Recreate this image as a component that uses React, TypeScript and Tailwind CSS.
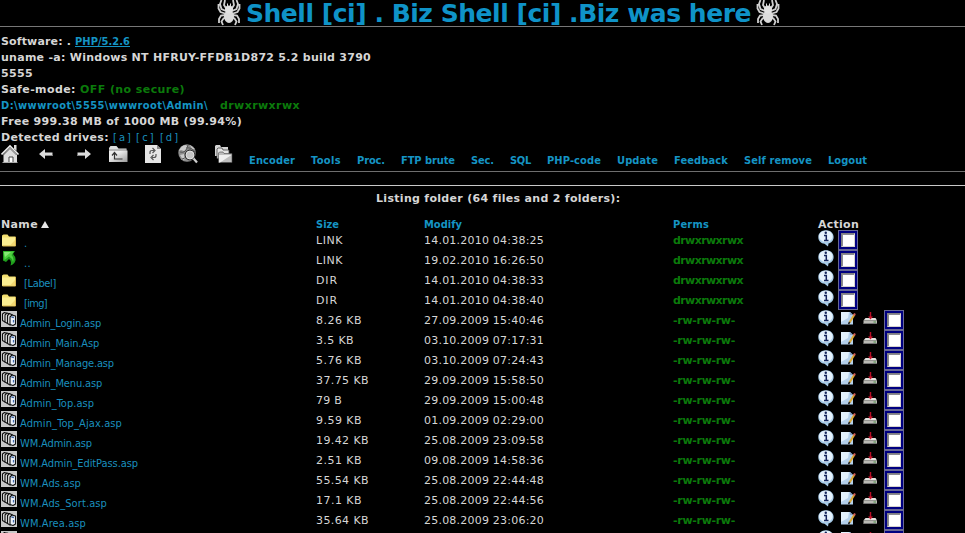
import { useLayoutEffect, useRef, useState } from "react";

/** Text whose tracking is adjusted so that it fills a fixed column width. */
function Fit({ w, children, className = "" }: { w: number; children: string; className?: string }) {
  const ref = useRef<HTMLSpanElement>(null);
  const [spacing, setSpacing] = useState(0);
  useLayoutEffect(() => {
    if (ref.current) {
      const natural = ref.current.getBoundingClientRect().width;
      setSpacing((w - natural) / children.length);
    }
  }, [w, children]);
  return (
    <span ref={ref} className={`inline-block whitespace-pre ${className}`} style={{ letterSpacing: `${spacing}px` }}>
      {children}
    </span>
  );
}

const verdana = "font-['DejaVu_Sans',sans-serif]";
const tahoma = "font-['DejaVu_Sans_Condensed','DejaVu_Sans',sans-serif]";

function Spider() {
  return (
    <svg width="24" height="26" viewBox="0 0 24 26" className="shrink-0">
      <g fill="none" stroke="#d0d0d0" strokeWidth="1.8">
        <path d="M9 11 4.500 9 3 4 4.500 0M8 13.500 3.500 12 1.500 8.500 1.500 4M9 15 4 15.500 2 19 2 23M10 17 6.500 18.500 4.500 21.500 6 25" />
        <path d="M15 11 19.500 9 21 4 19.500 0M16 13.500 20.500 12 22.500 8.500 22.500 4M15 15 20 15.500 22 19 22 23M14 17 17.500 18.500 19.500 21.500 18 25" />
        <path d="M9.500 9 7 5 8 0M14.500 9 17 5 16 0" />
      </g>
      <ellipse cx="12" cy="16.500" rx="5" ry="6.500" fill="#dcdcdc" />
      <ellipse cx="12" cy="9.500" rx="4" ry="4" fill="#e2e2e2" />
      <path d="M10.500 7V3.500M13.500 7V3.500" stroke="#ddd" />
    </svg>
  );
}

function HomeIcon() {
  return (
    <svg width="20" height="20" viewBox="0 0 20 20">
      <path d="M2.500 10.500 9 3.500 16 10.500V19H2.500Z" fill="#dedede" />
      <path d="M.5 10.500 9 2 17.500 10.500" fill="none" stroke="#eee" strokeWidth="1.700" />
      <path d="M2.500 11 9 4.500 15.500 11" fill="none" stroke="#666" strokeWidth=".9" />
      <path d="M13 1h2.500v6L13 4.500Z" fill="#ddd" />
      <path d="M8 19v-6h4v6" fill="#fff" stroke="#444" />
      <path d="M1.500 18.500h15" stroke="#aaa" />
    </svg>
  );
}

function ArrowIcon({ flip = false }: { flip?: boolean }) {
  return (
    <svg width="14" height="12" viewBox="0 0 14 12" className={flip ? "-scale-x-100" : ""}>
      <path d="M0 6 6 1V4.500H13.500V8H6V11Z" fill="#dcdcdc" />
      <path d="M6 7.500H13.500" stroke="#888" />
    </svg>
  );
}

function UpFolderIcon() {
  return (
    <svg width="20" height="18" viewBox="0 0 20 18">
      <defs>
        <linearGradient id="upFolder" x1="0" y1="0" x2="1" y2="1">
          <stop offset=".35" stopColor="#ececec" />
          <stop offset="1" stopColor="#999" />
        </linearGradient>
      </defs>
      <path d="M0 16.500V3L1.500 1H7.500L9.500 3.500H17.500V16.500Z" fill="#dedede" />
      <path d="M0 5.500H18.500V17H0Z" fill="url(#upFolder)" />
      <path d="M0 5H17.500" stroke="#8a8a8a" fill="none" />
      <path d="M5.500 8.500v5.500h8M3 10.500l2.500-3 2.500 3" stroke="#333" strokeWidth="1.200" fill="none" />
    </svg>
  );
}

function RefreshIcon() {
  return (
    <svg width="16" height="18" viewBox="0 0 16 18">
      <path d="M0 0H12L16 4V18H0Z" fill="#e5e5e5" />
      <path d="M12 0V4H16Z" fill="#888" />
      <path d="M5 9V7.500Q5 5.500 7 5.500H9M7.500 3 10 5.500 7.500 8M11 9V10.500Q11 12.500 9 12.500H7M8.500 10 6 12.500 8.500 15" fill="none" stroke="#555" strokeWidth="1.200" />
    </svg>
  );
}

function SearchIcon() {
  return (
    <svg width="20" height="20" viewBox="0 0 20 20">
      <circle cx="9" cy="9" r="8.700" fill="#8e8e8e" />
      <path d="M1 7Q3 1 8 1L10 4 6 7 3 6ZM12 1 17 5 14 5ZM2 11 6 10 7 15 5 16Z" fill="#ccc" />
      <path d="M2 8Q8 10 10 1M4 15Q9 14 9 9M8 4Q14 3 17 8" stroke="#555" fill="none" />
      <circle cx="12" cy="11" r="4.700" fill="#c4c4c4" stroke="#333" strokeWidth="1.500" />
      <circle cx="12" cy="11" r="4" fill="none" stroke="#f4f4f4" strokeWidth=".8" />
      <path d="M15.500 14.500 19 18.500" stroke="#ccc" strokeWidth="2.200" />
    </svg>
  );
}

function CopyIcon() {
  return (
    <svg width="18" height="18" viewBox="0 0 18 18">
      <path d="M0 11V1L1 0H5L6 2H13V11Z" fill="#d4d4d4" />
      <path d="M2 13.500V4L3 3H7L8 5H14V13.500Z" fill="#e4e4e4" stroke="#444" strokeWidth=".8" />
      <path d="M3.500 17.500V8L4.500 7H8L9 8.500H17V17.500Z" fill="#bdbdbd" stroke="#444" strokeWidth=".6" />
      <path d="M4 10H16.500L5 17.500H4Z" fill="#eee" />
    </svg>
  );
}

function FolderIcon() {
  return (
    <svg width="14" height="13" viewBox="0 0 14 13" className="mt-[4px] ml-[2px] mr-[8px]">
      <path d="M0 12V1.500L1.500.5H5.500L7 2.500H13.500V12Z" fill="#f3df70" />
      <path d="M0 3.500H13V11.500H0Z" fill="#fbee92" />
      <path d="M13.500 3V12H.5" fill="none" stroke="#d9b852" />
      <path d="M8 11.500 13 6V11.500Z" fill="#f2d872" />
    </svg>
  );
}

function UpIcon() {
  return (
    <svg width="14" height="15" viewBox="0 0 14 15" className="mt-[1px] ml-[2px] mr-[8px]">
      <path d="M1 0H13L11 3Q14 6 13.500 9.500Q12.500 13 8.500 14.500Q10 10 7 8L4 11 1 9.500Z" fill="#1f9e1c" />
      <path d="M1.500 .5H12L9.500 4Q12.500 7 11 11Q10 7 7 5.500L2.500 9Z" fill="#4fcf41" />
      <path d="M2 1H9L3 6Z" fill="#86e874" />
    </svg>
  );
}

function FileIcon() {
  return (
    <svg width="16" height="16" viewBox="0 0 16 16" className="ml-[1px] mr-[3px] mt-px">
      <path d="M0 0H16V16H0Z" fill="#c8c8c8" />
      <g stroke="#111" strokeWidth="1.1" strokeLinejoin="round">
        <path d="M1.500 3 3.500 1.500 6 2.500V10L4 11 1.500 9.500Z" fill="#ddd" />
        <path d="M4 4 6 2 8.500 3V11.500L6.500 12.500 4 11Z" fill="#ddd" />
        <path d="M6.500 4.500 8.500 2.500 11.500 4V13L9 14 6.500 12.500Z" fill="#ddd" />
        <path d="M9 6 11 4 14.500 5V13L12 14.500 9 13.500Z" fill="#eef3fb" />
      </g>
      <path d="M10.500 6 13 6.500M12.500 9V11.500" stroke="#426aa7" strokeWidth="1.300" />
    </svg>
  );
}

function InfoIcon() {
  return (
    <svg width="16" height="17" viewBox="0 0 16 17" className="shrink-0">
      <path d="M8 .2C12.500.2 15.600 3 15.600 7S13 12.800 10.500 13.500L10 16.500 6.500 13.800C3 13.500.3 11 .3 7S3.500.2 8 .2Z" fill="#a9cdea" />
      <path d="M8 .7C12 .7 14.500 3 14.500 6.500S11 12 8 12 1 10 1 6.500 4 .7 8 .7Z" fill="#e6f3fd" />
      <path d="M6 5.500H8.300V10.500M6 10.500H10.500" stroke="#14255c" strokeWidth="1.500" fill="none" />
      <circle cx="7.800" cy="2.800" r="1.200" fill="#14255c" />
    </svg>
  );
}

function EditIcon() {
  return (
    <svg width="15" height="13" viewBox="0 0 15 13" className="mt-[2px] shrink-0">
      <path d="M0 0H9L12 3V12.500H0Z" fill="#b4d0ec" />
      <path d="M0 0H8L7 6 0 10Z" fill="#e3f1fd" />
      <path d="M9 0V3H12" fill="#87a6ca" />
      <path d="M8.500 10.500 13.500 2.500" stroke="#dba936" strokeWidth="2" />
      <path d="M12.800 3.500 14 1.500" stroke="#cf5c55" strokeWidth="2" />
      <path d="M7.500 12 8.700 10" stroke="#222" strokeWidth="1.500" />
    </svg>
  );
}

function DownloadIcon() {
  return (
    <svg width="15" height="13" viewBox="0 0 15 13" className="mt-[2px] shrink-0">
      <path d="M2.500 6H12.500L14 8.500H.5Z" fill="#e2e2de" />
      <path d="M.5 8.500H14V12H.5Z" fill="#b9b9b3" />
      <path d="M1 11.500H14" stroke="#777" />
      <path d="M10.500 10H13" stroke="#4c944a" />
      <path d="M7.500 0V5" stroke="#b80d27" strokeWidth="1.500" />
      <path d="M5 4.500H10L7.500 7.500Z" fill="#c7122b" />
    </svg>
  );
}

function CheckBox() {
  return (
    <span className="h-5 w-5 shrink-0 border border-[#686894] bg-[#000080] pt-[2px] pl-[2px]">
      <span className="block h-[14px] w-[14px] border border-[#d6d3ce] border-t-[#808080] border-l-[#808080] bg-white">
        <span className="block h-3 w-3 border-t border-l border-[#8c8c94]" />
      </span>
    </span>
  );
}

const menu: [string, number, number][] = [
  ["Encoder", 249, 46],
  ["Tools", 311, 30],
  ["Proc.", 357, 28],
  ["FTP brute", 401, 54],
  ["Sec.", 471, 23],
  ["SQL", 510, 21],
  ["PHP-code", 547, 54],
  ["Update", 617, 41],
  ["Feedback", 674, 54],
  ["Self remove", 744, 68],
  ["Logout", 828, 39],
];

type Entry = { kind: "dir" | "up" | "file"; name: string; nw: number; size: string; sw: number; date: string };
const entries: Entry[] = [
  { kind: "dir", name: ".", nw: 3, size: "LINK", sw: 27, date: "14.01.2010 04:38:25" },
  { kind: "up", name: "..", nw: 7, size: "LINK", sw: 27, date: "19.02.2010 16:26:50" },
  { kind: "dir", name: "[Label]", nw: 32, size: "DIR", sw: 22, date: "14.01.2010 04:38:33" },
  { kind: "dir", name: "[img]", nw: 23, size: "DIR", sw: 22, date: "14.01.2010 04:38:40" },
  { kind: "file", name: "Admin_Login.asp", nw: 81, size: "8.26 KB", sw: 46, date: "27.09.2009 15:40:46" },
  { kind: "file", name: "Admin_Main.Asp", nw: 79, size: "3.5 KB", sw: 38, date: "03.10.2009 07:17:31" },
  { kind: "file", name: "Admin_Manage.asp", nw: 94, size: "5.76 KB", sw: 46, date: "03.10.2009 07:24:43" },
  { kind: "file", name: "Admin_Menu.asp", nw: 82, size: "37.75 KB", sw: 53, date: "29.09.2009 15:58:50" },
  { kind: "file", name: "Admin_Top.asp", nw: 74, size: "79 B", sw: 26, date: "29.09.2009 15:00:48" },
  { kind: "file", name: "Admin_Top_Ajax.asp", nw: 102, size: "9.59 KB", sw: 46, date: "01.09.2009 02:29:00" },
  { kind: "file", name: "WM.Admin.asp", nw: 72, size: "19.42 KB", sw: 53, date: "25.08.2009 23:09:58" },
  { kind: "file", name: "WM.Admin_EditPass.asp", nw: 118, size: "2.51 KB", sw: 46, date: "09.08.2009 14:58:36" },
  { kind: "file", name: "WM.Ads.asp", nw: 61, size: "55.54 KB", sw: 53, date: "25.08.2009 22:44:48" },
  { kind: "file", name: "WM.Ads_Sort.asp", nw: 87, size: "17.1 KB", sw: 46, date: "25.08.2009 22:44:56" },
  { kind: "file", name: "WM.Area.asp", nw: 66, size: "35.64 KB", sw: 53, date: "25.08.2009 23:06:20" },
];

const columns = "grid grid-cols-[316px_108px_249px_145px_147px]";

function Actions({ file }: { file: boolean }) {
  return (
    <div className="flex items-start">
      <InfoIcon />
      {file ? (
        <>
          <span className="w-[7px]" />
          <EditIcon />
          <span className="w-[7px]" />
          <DownloadIcon />
          <span className="w-[6px]" />
        </>
      ) : (
        <span className="w-1" />
      )}
      <CheckBox />
    </div>
  );
}

function Row({ e }: { e: Entry }) {
  const file = e.kind === "file";
  return (
    <div className={`${columns} h-5 leading-[22px]`}>
      <div className="flex items-start">
        {e.kind === "dir" ? <FolderIcon /> : e.kind === "up" ? <UpIcon /> : <FileIcon />}
        <Fit w={e.nw} className={`${tahoma} mt-[3px] text-[#1a8fbe]`}>{e.name}</Fit>
      </div>
      <div><Fit w={e.sw}>{e.size}</Fit></div>
      <div><Fit w={120}>{e.date}</Fit></div>
      <div><Fit w={file ? 62 : 70} className="font-bold text-[#0b7a0b]">{file ? "-rw-rw-rw-" : "drwxrwxrwx"}</Fit></div>
      <Actions file={file} />
    </div>
  );
}

export default function App() {
  return (
    <div className={`${verdana} h-[533px] w-[965px] overflow-hidden bg-black text-[11px] text-[#d6d6d6]`}>
      <div className="flex h-[27px] items-start border-b border-[#777] pl-[217px]">
        <Spider />
        <Fit w={505} className="ml-[5px] text-[25px] leading-[28px] font-bold text-[#0f93c8]">
          Shell [ci] . Biz Shell [ci] .Biz was here
        </Fit>
        <span className="w-[5px]" />
        <Spider />
      </div>
      <div className="h-[117px] pt-[7px] pl-px leading-4 font-bold">
        <div className="flex h-4">
          <Fit w={74}>{"Software: . "}</Fit>
          <Fit w={55} className={`${tahoma} text-[#1594c4] underline`}>PHP/5.2.6</Fit>
        </div>
        <div className="h-4"><Fit w={370}>uname -a: Windows NT HFRUY-FFDB1D872 5.2 build 3790</Fit></div>
        <div className="h-4"><Fit w={32}>5555</Fit></div>
        <div className="flex h-4">
          <Fit w={79}>{"Safe-mode: "}</Fit>
          <Fit w={105} className="text-[#0b7a0b]">OFF (no secure)</Fit>
        </div>
        <div className="flex h-4">
          <Fit w={207} className={`${tahoma} text-[#1594c4]`}>{"D:\\wwwroot\\5555\\wwwroot\\Admin\\"}</Fit>
          <Fit w={80} className="ml-[12px] text-[#0b7a0b]">drwxrwxrwx</Fit>
        </div>
        <div className="h-4"><Fit w={241}>Free 999.38 MB of 1000 MB (99.94%)</Fit></div>
        <div className="flex h-4">
          <Fit w={112}>{"Detected drives: "}</Fit>
          <Fit w={20} className={`${tahoma} mr-[3px] font-normal text-[#1a8fbe]`}>[a]</Fit>
          <Fit w={20} className={`${tahoma} mr-[4px] font-normal text-[#1a8fbe]`}>[c]</Fit>
          <Fit w={20} className={`${tahoma} font-normal text-[#1a8fbe]`}>[d]</Fit>
        </div>
      </div>
      <div className="flex h-[28px] border-b border-[#6e6e6e]">
        <div className="grid h-5 w-[249px] shrink-0 grid-cols-[38px_38px_32px_36px_33px_37px_34px] items-center pl-px">
          <HomeIcon />
          <ArrowIcon />
          <ArrowIcon flip />
          <UpFolderIcon />
          <RefreshIcon />
          <SearchIcon />
          <CopyIcon />
        </div>
        <div className={`${tahoma} flex pt-2 leading-[18px] font-bold text-[#1594c4]`}>
          {menu.map(([label, x, w], i) => (
            <div key={label} className="shrink-0" style={{ width: (menu[i + 1]?.[1] ?? 965) - x }}>
              <Fit w={w}>{label}</Fit>
            </div>
          ))}
        </div>
      </div>
      <div className="h-[14px] border-b border-[#c8c8c8]" />
      <div className="h-[30px] pl-[376px] leading-[25px] font-bold">
        <Fit w={244}>Listing folder (64 files and 2 folders):</Fit>
      </div>
      <div className={`${columns} h-[14px] leading-[18px] font-bold`}>
        <div className="flex pl-px">
          <Fit w={37}>Name</Fit>
          <svg width="8" height="7" viewBox="0 0 8 7" className="mt-[5px] ml-[3px]">
            <path d="M4 0 8 7H0Z" fill="#e8e8e8" />
          </svg>
        </div>
        <div><Fit w={23} className={`${tahoma} text-[#1594c4]`}>Size</Fit></div>
        <div><Fit w={38} className={`${tahoma} text-[#1594c4]`}>Modify</Fit></div>
        <div><Fit w={36} className={`${tahoma} text-[#1594c4]`}>Perms</Fit></div>
        <div><Fit w={41}>Action</Fit></div>
      </div>
      {entries.map((e) => <Row key={e.name} e={e} />)}
      <div className={`${columns} h-[3px] overflow-hidden`}>
        <div><FileIcon /></div>
        <div />
        <div />
        <div />
        <Actions file />
      </div>
    </div>
  );
}
